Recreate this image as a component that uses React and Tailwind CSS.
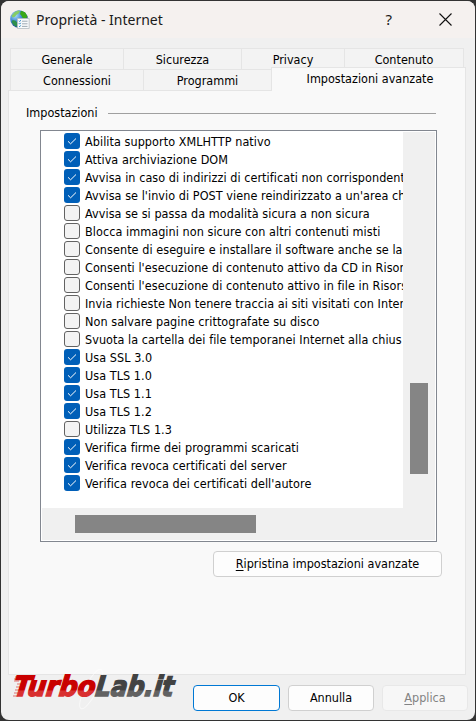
import { useState } from 'react'
import clsx from 'clsx'

// labels wider than the list are cut at its right edge
const SETTINGS = [
  { label: 'Abilita supporto XMLHTTP nativo', on: true },
  { label: 'Attiva archiviazione DOM', on: true },
  { label: 'Avvisa in caso di indirizzi di certificati non corrispondent', on: true },
  { label: "Avvisa se l'invio di POST viene reindirizzato a un'area ch", on: true },
  { label: 'Avvisa se si passa da modalità sicura a non sicura', on: false },
  { label: 'Blocca immagini non sicure con altri contenuti misti', on: false },
  { label: 'Consente di eseguire e installare il software anche se la', on: false },
  { label: "Consenti l'esecuzione di contenuto attivo da CD in Risors", on: false },
  { label: "Consenti l'esecuzione di contenuto attivo in file in Risors", on: false },
  { label: 'Invia richieste Non tenere traccia ai siti visitati con Inter', on: false },
  { label: 'Non salvare pagine crittografate su disco', on: false },
  { label: 'Svuota la cartella dei file temporanei Internet alla chius', on: false },
  { label: 'Usa SSL 3.0', on: true },
  { label: 'Usa TLS 1.0', on: true },
  { label: 'Usa TLS 1.1', on: true },
  { label: 'Usa TLS 1.2', on: true },
  { label: 'Utilizza TLS 1.3', on: false },
  { label: 'Verifica firme dei programmi scaricati', on: true },
  { label: 'Verifica revoca certificati del server', on: true },
  { label: "Verifica revoca dei certificati dell'autore", on: true },
]

function GlobeIcon() {
  return (
    <svg width="20" height="20" viewBox="0 0 20 20" className="shrink-0">
      <defs>
        <radialGradient id="sea" cx="0.3" cy="0.3" r="0.8">
          <stop offset="0" stopColor="#a8dcfb" />
          <stop offset="0.45" stopColor="#3f86d2" />
          <stop offset="1" stopColor="#0f3478" />
        </radialGradient>
      </defs>
      <circle cx="9" cy="9" r="8.8" fill="url(#sea)" />
      <path d="M4.5 2.2 8 .5l2 .6-1 2.2-2.5 1.4L5 6.8 2.6 7.4 1.6 5.8Z" fill="#86cc66" />
      <path d="m11 .7 4 1.6 2.4 4-1.6 3-3-1-1.3-2.6L10 4Z" fill="#3aa818" />
      <path d="m2.6 10 3.2.8 1.7 2.4-.6 3.6-3-1.6L1.6 12Z" fill="#2f8f4a" />
      <path d="M7.5 8.5h11.7v10H7.5Z" fill="#f8fafb" stroke="#b4bcc2" strokeWidth=".8" />
      <path d="m9 10.8.7.7 1-1.3M9 13.4l.7.7 1-1.3M9 16l.7.7 1-1.3" fill="none" stroke="#2385c7" strokeWidth="1" />
      <path d="M12 11.2h5.5M12 13.8h5.5M12 16.4h5.5" stroke="#93a1ab" strokeWidth=".9" />
    </svg>
  )
}

function Logo() {
  return (
    <svg width="176" height="50" viewBox="0 0 176 50" className="absolute left-[8px] top-[666px]">
      <defs>
        <linearGradient id="red" x1="0" x2="0" y1="0" y2="1">
          <stop offset="0.6" stopColor="#c90000" />
          <stop offset="0.61" stopColor="#d93030" />
        </linearGradient>
        <linearGradient id="gray" x1="0" x2="0" y1="0" y2="1">
          <stop offset="0.6" stopColor="#424242" />
          <stop offset="0.61" stopColor="#626262" />
        </linearGradient>
      </defs>
      {/* speed lines behind the T */}
      <path d="M7 11h7M6 13h7M6 15h5M9 18h5M8 21h5M7 24h5M6 27h5M5 30h5" stroke="#e07070" strokeWidth="1" />
      <ellipse cx="83" cy="23" rx="6" ry="22" transform="rotate(27 83 23)" fill="none" stroke="#fff" strokeOpacity=".6" />
      <g
        transform="translate(4.5 0) skewX(-7)"
        fontFamily="'DejaVu Sans', sans-serif"
        fontWeight="700"
        fontStyle="italic"
        fontSize="28"
        strokeWidth="1.4"
      >
        <text x="4" y="30.5" textLength="82" lengthAdjust="spacingAndGlyphs" fill="url(#red)" stroke="url(#red)">Turbo</text>
        <text x="86" y="30.5" textLength="78" lengthAdjust="spacingAndGlyphs" fill="url(#gray)" stroke="url(#gray)">Lab.it</text>
      </g>
    </svg>
  )
}

function Tab({ children, className }) {
  return (
    <div className={clsx('flex items-center justify-center border-l border-t border-[#e5e5e5] bg-[#f3f3f3]', className)}>
      {children}
    </div>
  )
}

function CheckRow({ label, on, onToggle }) {
  return (
    <div className="flex h-[18px] shrink-0 items-center whitespace-nowrap pl-[22px]" onClick={onToggle}>
      <span
        className={clsx(
          'mr-[5px] flex size-4 shrink-0 items-center justify-center rounded-[3px]',
          on ? 'bg-[#005fb8]' : 'border border-[#626262] bg-[#f3f3f3]',
        )}
      >
        {on && (
          <svg width="16" height="16" viewBox="0 0 16 16" fill="none" stroke="#fff" strokeWidth="1">
            <path d="m4 8.3 2.6 2.5L12 5.5" />
          </svg>
        )}
      </span>
      <span className="pt-[2px] tracking-[0.06px]">{label}</span>
    </div>
  )
}

function Button({ children, className }) {
  return (
    <button className={clsx('flex h-[26px] items-center justify-center rounded-[4px] border bg-[#fdfdfd]', className)}>
      {children}
    </button>
  )
}

export default function App() {
  const [items, setItems] = useState(SETTINGS)
  const toggle = (i) => setItems((list) => list.map((it, n) => (n === i ? { ...it, on: !it.on } : it)))

  return (
    <div className="relative h-[721px] w-[476px] overflow-hidden bg-[#333] pl-px pt-px font-['DejaVu_Sans_Condensed','DejaVu_Sans',sans-serif] text-[12.5px] leading-[18px] text-black [font-stretch:condensed]">
      <div className="flex h-[719px] w-[474px] flex-col overflow-hidden rounded-[8px] bg-[#f0f0f0]">
        {/* Title bar */}
        <div className="flex h-[37px] shrink-0 items-center bg-[#f5f1ef] pl-[9px] font-['Noto_Sans',sans-serif] text-[14px] text-[#1a1a1a]">
          <GlobeIcon />
          <span className="ml-[6px]">Proprietà - Internet</span>
          <span className="mb-px ml-auto mr-[47px] text-[15px]">?</span>
          <svg width="13" height="13" viewBox="0 0 13 13" className="mr-[23px]" stroke="#111" strokeWidth="1.1">
            <path d="m.5.5 12 12M12.5.5l-12 12" />
          </svg>
        </div>

        {/* Tabs */}
        <div className="ml-[9px] mt-[10px] flex h-[21px] w-[454px] shrink-0 border-r border-[#e5e5e5]">
          <Tab className="w-[113px] pt-[2px]">Generale</Tab>
          <Tab className="w-[118px] pt-[2px]">Sicurezza</Tab>
          <Tab className="w-[103px] pt-[2px]">Privacy</Tab>
          <Tab className="flex-1 pt-[2px]">Contenuto</Tab>
        </div>
        <div className="ml-[9px] flex h-[21px] w-[456px] shrink-0">
          <Tab className="w-[133px] pt-[2px]">Connessioni</Tab>
          <Tab className="w-[128px] pt-[2px]">Programmi</Tab>
          <Tab className="relative z-10 -mb-px -mt-[2px] flex-1 border-r bg-[#f9f9f9]! pb-[2px] pl-[3px]">Impostazioni avanzate</Tab>
        </div>

        {/* Active panel */}
        <div className="ml-[7px] flex h-[585px] w-[458px] shrink-0 flex-col border border-[#e5e5e5] bg-[#f9f9f9]">
          <div className="mt-[13px] flex h-[18px] items-center pl-[17px]">
            <span className="w-[82px]">Impostazioni</span>
            <span className="h-px w-[328px] bg-[#a0a0a0]" />
          </div>
          <div className="ml-[31px] mt-[8px] flex h-[412px] w-[397px] flex-col border border-[#828790] bg-white p-px">
            <div className="flex h-[376px]">
              <div className="w-[361px] overflow-hidden">
                {items.map((it, i) => (
                  <CheckRow key={it.label} {...it} onToggle={() => toggle(i)} />
                ))}
              </div>
              <div className="w-[32px] bg-[#f0f0f0] pl-[7px] pt-[251px]">
                <div className="h-[91px] w-[18px] bg-[#858585]" />
              </div>
            </div>
            <div className="h-[32px] bg-[#f0f0f0] pl-[33px] pt-[7px]">
              <div className="h-[18px] w-[181px] bg-[#858585]" />
            </div>
          </div>
          <Button className="ml-[204px] mt-[9px] w-[229px] border-[#d0d0d0]">
            <u className="underline-offset-2">R</u>ipristina impostazioni avanzate
          </Button>
        </div>

        {/* Dialog buttons */}
        <div className="mt-[10px] flex justify-end gap-[8px] pr-[7px]">
          <Button className="w-[87px] border-[#0078d4]">OK</Button>
          <Button className="w-[86px] border-[#d0d0d0]">Annulla</Button>
          <Button className="w-[86px] border-[#e8e8e8] bg-[#f7f7f7]! text-[#838383]">
            <u className="underline-offset-2">A</u>pplica
          </Button>
        </div>
      </div>
      <Logo />
    </div>
  )
}
